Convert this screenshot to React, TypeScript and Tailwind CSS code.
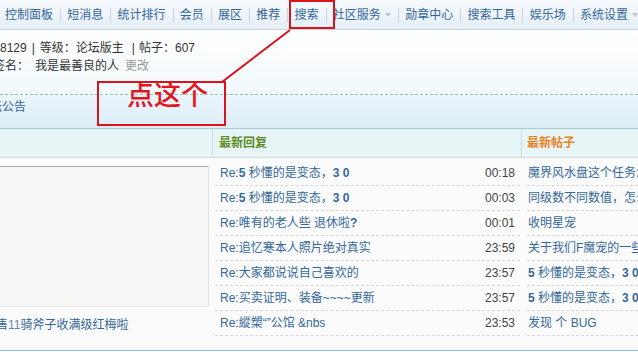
import React from "react";

const navItems = [
  { label: "控制面板" },
  { label: "短消息" },
  { label: "统计排行" },
  { label: "会员" },
  { label: "展区" },
  { label: "推荐" },
  { label: "搜索" },
  { label: "社区服务", menu: true },
  { label: "勋章中心" },
  { label: "搜索工具" },
  { label: "娱乐场" },
  { label: "系统设置", menu: true },
];

const replies = [
  { title: <><b>5</b> 秒懂的是变态，<b>3 0</b></>, time: "00:18" },
  { title: <><b>5</b> 秒懂的是变态，<b>3 0</b></>, time: "00:03" },
  { title: <>唯有的老人些 退休啦<b>?</b></>, time: "00:01" },
  { title: <>追忆寒本人照片绝对真实</>, time: "23:59" },
  { title: <>大家都说说自己喜欢的</>, time: "23:57" },
  { title: <>买卖证明、装备~~~~更新</>, time: "23:57" },
  { title: <>縱槊“”公馆 {"&nbs"}</>, time: "23:53" },
];

const newest = [
  <>魔界风水盘这个任务怎么做</>,
  <>同级数不同数值，怎么回事</>,
  <>收明星宠</>,
  <>关于我们F魔宠的一些问题</>,
  <><b>5</b> 秒懂的是变态，<b>3 0</b></>,
  <><b>5</b> 秒懂的是变态，<b>3 0</b></>,
  <>发现 个 BUG</>,
];

function Caret() {
  return (
    <span className="ml-[4px] inline-block w-0 h-0 border-l-[3px] border-r-[3px] border-t-[4px] border-l-transparent border-r-transparent border-t-[#b9c6d2]" />
  );
}

export default function App() {
  return (
    <div className="relative w-[638px] h-[354px] overflow-hidden bg-white text-[12px] font-['Liberation_Sans','Noto_Sans_CJK_SC',sans-serif]">
      {/* top nav */}
      <div className="h-[30px] flex items-center pl-[5px] whitespace-nowrap text-[#336699] bg-gradient-to-b from-[#f7fafd] to-[#e5eef6] border-b border-[#c5d3df]">
        {navItems.map((item, i) => (
          <React.Fragment key={item.label}>
            {i > 0 && <span className="mx-[7px] w-px h-[14px] bg-[#c8d5e1]" />}
            <span className="flex items-center">
              {item.label}
              {item.menu && <Caret />}
            </span>
          </React.Fragment>
        ))}
      </div>

      {/* user info */}
      <div className="h-[65px] pt-[9px] leading-[18px] text-[#333] whitespace-nowrap bg-gradient-to-b from-white to-[#f1f8fb] border-b border-dashed border-[#8fc2cf]">
        <div className="flex">
          <span>8129</span>
          <span className="mx-[5px]">|</span>
          <span>等级：论坛版主</span>
          <span className="ml-[8px] mr-[4px]">|</span>
          <span>帖子：607</span>
        </div>
        <div className="flex ml-[-7px]">
          <span>签名：</span>
          <span className="ml-[6px]">我是最善良的人</span>
          <span className="ml-[6px] text-[#999]">更改</span>
        </div>
      </div>

      {/* notice */}
      <div className="h-[34px] pt-[3px] leading-[18px] text-[#336699] bg-gradient-to-b from-[#eaf5fa] to-[#dcedf6] border-b border-[#a6ccd7]">
        <span className="ml-[-10px]">坛公告</span>
      </div>

      {/* table header */}
      <div className="h-[29px] flex font-bold bg-[#e8f5f7] border-b border-[#cfdde2]">
        <div className="w-[213px] border-r border-[#cfdde2]" />
        <div className="w-[309px] flex items-center pl-[6px] text-[#5b8a1d] border-r border-[#cfdde2]">
          最新回复
        </div>
        <div className="flex-1 flex items-center pl-[5px] text-[#e8821e]">最新帖子</div>
      </div>

      {/* body */}
      <div className="h-[193px] flex bg-[#fbfbfb] border-b border-[#8fc2cf]">
        <div className="w-[213px] pt-[8px]">
          <div className="w-[209px] h-[141px] bg-[#f7f7f5] border-t border-t-[#a9a9a9] border-r border-r-[#e3e3e3] border-b border-b-[#ebebeb]" />
          <div className="mt-[9px] ml-[-16px] leading-[18px] whitespace-nowrap text-[#336699]">
            出售<span className="text-[#5f88b0]">11</span>骑斧子收满级红梅啦
          </div>
        </div>

        <div className="w-[309px] pt-[3px] pl-[2px] pr-[2px]">
          {replies.map((r, i) => (
            <div
              key={i}
              className="h-[25px] flex items-center justify-between pl-[5px] pr-[5px] border-b border-dashed border-[#d2d8dc] whitespace-nowrap"
            >
              <span className="text-[#35689a]">Re:{r.title}</span>
              <span className="text-[#444]">{r.time}</span>
            </div>
          ))}
        </div>

        <div className="flex-1 pt-[3px] pl-[5px] overflow-hidden">
          {newest.map((t, i) => (
            <div
              key={i}
              className="h-[25px] flex items-center pl-[1px] border-b border-dashed border-[#d2d8dc] whitespace-nowrap text-[#35689a]"
            >
              <span>{t}</span>
            </div>
          ))}
        </div>
      </div>

      {/* annotation overlay */}
      <svg className="absolute left-0 top-0 pointer-events-none" width="638" height="354">
        <line x1="290" y1="30" x2="222" y2="82" stroke="#d8141c" strokeWidth="2" />
      </svg>
      <div className="absolute left-[289px] top-0 w-[46px] h-[29px] border-2 border-[#d8141c]" />
      <div className="absolute left-[97px] top-[81px] w-[129px] h-[45px] border-2 border-[#d8141c]" />
      <div className="absolute left-[127px] top-[79px] text-[27px] leading-[30px] font-medium text-[#e5151d] font-['Noto_Sans_CJK_SC',sans-serif]">
        点这个
      </div>
    </div>
  );
}
